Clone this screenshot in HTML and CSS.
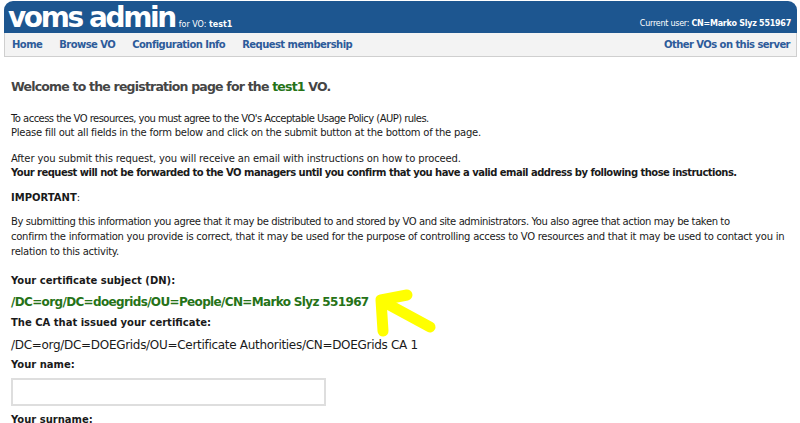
FILE: index.html
```html
<!DOCTYPE html>
<html>
<head>
<meta charset="utf-8">
<title>voms admin</title>
<link rel="stylesheet" href="styles.css">
</head>
<body>
<div class="page">
  <header class="header">
    <div class="brand"><span class="logo">voms admin</span><span class="for">for VO: <b>test1</b></span></div>
    <div class="user">Current user: <b>CN=Marko Slyz 551967</b></div>
  </header>
  <nav class="nav">
    <div class="nav-left">
      <a href="#">Home</a>
      <a href="#">Browse VO</a>
      <a href="#">Configuration Info</a>
      <a href="#">Request membership</a>
    </div>
    <a href="#">Other VOs on this server</a>
  </nav>
  <main class="content">
    <h1 class="title">Welcome to the registration page for the <span class="green">test1</span> VO.</h1>
    <p class="para p1"><span class="tight">To access the VO resources, you must agree to the VO's Acceptable Usage Policy (AUP) rules.</span><br>Please fill out all fields in the form below and click on the submit button at the bottom of the page.</p>
    <p class="para p2"><span class="loose">After you submit this request, you will receive an email with instructions on how to proceed.</span><br><b class="strong">Your request will not be forwarded to the VO managers until you confirm that you have a valid email address by following those instructions.</b></p>
    <p class="para p3"><b>IMPORTANT</b>:</p>
    <p class="para long"><span class="mid">By submitting this information you agree that it may be distributed to and stored by VO and site administrators. You also agree that action may be taken to</span><br>confirm the information you provide is correct, that it may be used for the purpose of controlling access to VO resources and that it may be used to contact you in<br>relation to this activity.</p>
    <div class="field-label l-dn">Your certificate subject (DN):</div>
    <div class="dn">/DC=org/DC=doegrids/OU=People/CN=Marko Slyz 551967</div>
    <div class="field-label l-ca">The CA that issued your certificate:</div>
    <div class="ca">/DC=org/DC=DOEGrids/OU=Certificate Authorities/CN=DOEGrids CA 1</div>
    <div class="field-label l-name">Your name:</div>
    <input class="text-input" type="text">
    <div class="field-label l-surname">Your surname:</div>
  </main>
  <svg class="arrow" width="80" height="60" viewBox="0 0 80 60">
    <polyline points="30,4 4,9 6,40" fill="none" stroke="#ffff00" stroke-width="11" stroke-linecap="round" stroke-linejoin="round"/>
    <line x1="5" y1="10" x2="53" y2="36" stroke="#ffff00" stroke-width="11" stroke-linecap="round"/>
  </svg>
</div>
</body>
</html>
```

FILE: styles.css
```css
html, body {
  margin: 0;
  padding: 0;
  background: #ffffff;
}
body {
  font-family: "DejaVu Sans", "Liberation Sans", sans-serif;
  color: #1a1a1a;
}
.page {
  position: relative;
  padding: 1px 3px 0 4px;
  height: 422px;
  overflow: hidden;
}
.header {
  background: #1d5690;
  border-radius: 9px 9px 0 0;
  height: 32px;
  display: flex;
  justify-content: space-between;
  align-items: flex-end;
  padding: 0 6px 0 4px;
  color: #ffffff;
}
.brand {
  display: flex;
  align-items: baseline;
}
.logo {
  font-size: 28px;
  font-weight: bold;
  letter-spacing: -2.4px;
  line-height: 30px;
}
.for {
  font-size: 8px;
  margin-left: 4px;
}
.user {
  font-size: 8px;
  letter-spacing: -0.25px;
  padding-bottom: 5px;
}
.nav {
  background: #f3f3f3;
  border: 1px solid #cfcfcf;
  border-top: none;
  height: 23px;
  display: flex;
  justify-content: space-between;
  align-items: center;
  padding: 0 6px 0 7px;
  font-size: 10px;
  font-weight: bold;
  letter-spacing: -0.55px;
}
.nav a {
  color: #2d5b9a;
  text-decoration: none;
}
.nav-left {
  display: flex;
  gap: 17px;
}
.content {
  padding: 20px 0 0 7px;
  font-size: 10px;
  line-height: 14px;
}
.title {
  font-size: 12.5px;
  font-weight: bold;
  color: #454545;
  letter-spacing: -0.8px;
  margin: 0 0 15px 0;
  line-height: 20px;
}
.green {
  color: #267318;
}
.para {
  margin: 0;
  letter-spacing: -0.25px;
  white-space: nowrap;
}
.tight {
  letter-spacing: -0.54px;
}
.loose {
  letter-spacing: -0.13px;
}
.mid {
  letter-spacing: -0.4px;
}
.p2 {
  margin-top: 12px;
}
.strong {
  letter-spacing: -0.53px;
}
.p3 {
  margin-top: 11px;
  letter-spacing: 0;
}
.long {
  line-height: 15px;
  margin-top: 9px;
}
.field-label {
  font-weight: bold;
}
.l-dn {
  margin-top: 15px;
}
.dn {
  font-size: 12px;
  font-weight: bold;
  color: #267318;
  letter-spacing: -0.65px;
  margin-top: 6px;
  line-height: 16px;
}
.l-ca {
  margin-top: 6px;
}
.ca {
  font-size: 12px;
  letter-spacing: -0.3px;
  margin-top: 7px;
  line-height: 16px;
}
.l-name {
  margin-top: 5px;
}
.text-input {
  display: block;
  box-sizing: border-box;
  width: 315px;
  height: 28px;
  margin: 6px 0 0 0;
  border: 2px solid #dedede;
  background: #ffffff;
}
.l-surname {
  margin-top: 7px;
}
.arrow {
  position: absolute;
  left: 377px;
  top: 291px;
  overflow: visible;
}
```
